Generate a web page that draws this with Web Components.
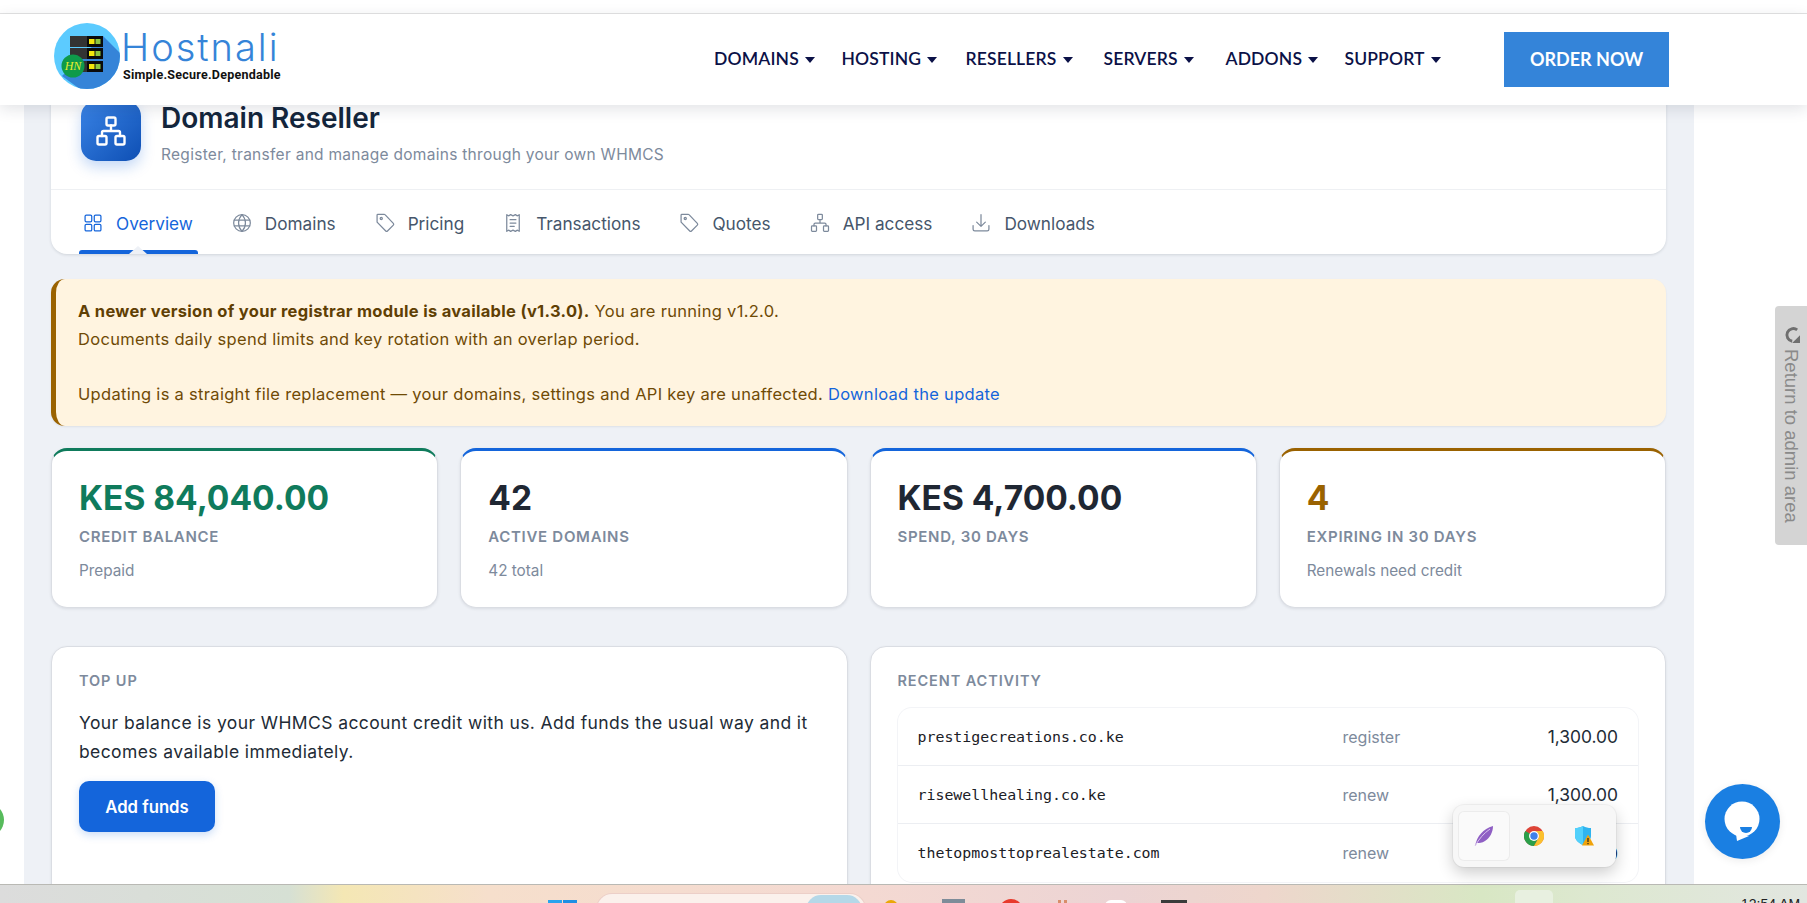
<!DOCTYPE html>
<html lang="en">
<head>
<meta charset="utf-8">
<title>Domain Reseller</title>
<style>
  html, body { margin: 0; height: 100%; background: #fff; overflow: hidden; }
  body { font-family: Inter, "Open Sans", sans-serif; color: #1f2733; }
</style>
</head>
<body>
<app-shell>
  <site-header slot="header"></site-header>
  <hero-card
    slot="content"
    heading="Domain Reseller"
    sub="Register, transfer and manage domains through your own WHMCS">
    <tab-link active icon="grid">Overview</tab-link>
    <tab-link icon="globe">Domains</tab-link>
    <tab-link icon="tag">Pricing</tab-link>
    <tab-link icon="receipt">Transactions</tab-link>
    <tab-link icon="tag">Quotes</tab-link>
    <tab-link icon="sitemap">API access</tab-link>
    <tab-link icon="download">Downloads</tab-link>
  </hero-card>
  <alert-box slot="content">
    <b>A newer version of your registrar module is available (v1.3.0).</b> You are running v1.2.0.<br>
    Documents daily spend limits and key rotation with an overlap period.<br><br>
    Updating is a straight file replacement — your domains, settings and API key are unaffected. <a>Download the update</a>
  </alert-box>
  <stat-grid slot="content">
    <stat-card accent="#0f7b5c" value-color="#0f7b5c" value="KES 84,040.00" label="Credit balance" note="Prepaid"></stat-card>
    <stat-card accent="#1465db" value="42" label="Active domains" note="42 total"></stat-card>
    <stat-card accent="#1465db" value="KES 4,700.00" label="Spend, 30 days"></stat-card>
    <stat-card accent="#9a6200" value-color="#9a6200" value="4" label="Expiring in 30 days" note="Renewals need credit"></stat-card>
  </stat-grid>
  <panel-row slot="content">
    <panel-card heading="Top up">
      <p>Your balance is your WHMCS account credit with us. Add funds the usual way and it becomes available immediately.</p>
      <add-button>Add funds</add-button>
    </panel-card>
    <panel-card heading="Recent activity">
      <activity-list>
        <activity-row domain="prestigecreations.co.ke" kind="register" amount="1,300.00"></activity-row>
        <activity-row domain="risewellhealing.co.ke" kind="renew" amount="1,300.00"></activity-row>
        <activity-row domain="thetopmosttoprealestate.com" kind="renew" amount="1,300.00"></activity-row>
      </activity-list>
    </panel-card>
  </panel-row>
  <task-bar slot="footer"></task-bar>
  <admin-tab slot="overlay"></admin-tab>
  <chat-button slot="overlay"></chat-button>
  <tray-popup slot="overlay"></tray-popup>
</app-shell>

<script>
const ICONS = {
  grid: '<rect x="2.500" y="2.500" width="8" height="8" rx="1.500"/><rect x="13.500" y="2.500" width="8" height="8" rx="1.500"/><rect x="2.500" y="13.500" width="8" height="8" rx="1.500"/><rect x="13.500" y="13.500" width="8" height="8" rx="1.500"/>',
  globe: '<circle cx="12" cy="12" r="10"/><path d="M2.800 8.500h18.400M2.800 15.500h18.400"/><path d="M12 2c-5.500 6-5.500 14 0 20M12 2c5.500 6 5.500 14 0 20"/>',
  tag: '<path d="M3.500 1.500h7.500a1.500 1.500 0 0 1 1 .5l10 10.500c.6.700.6 1.500 0 2.100l-7 7c-.6.600-1.500.6-2.100 0L2.500 11V2.500a1 1 0 0 1 1-1z"/><circle cx="7.500" cy="6.500" r="1.300"/>',
  receipt: '<path d="M4.500 22V2l2.200 1.400L9.200 2l2.800 1.400L14.800 2l2.500 1.400L19.500 2v20l-2.200-1.400-2.500 1.400-2.800-1.400L9.200 22l-2.500-1.400z"/><path d="M8.500 8h7M8.500 12h7M8.500 16h5"/>',
  sitemap: '<rect x="9.200" y="1.500" width="5.600" height="6.500" rx="1"/><rect x="1.800" y="15.500" width="6" height="6.500" rx="1"/><rect x="16.200" y="15.500" width="6" height="6.500" rx="1"/><path d="M12 8v4M4.800 15.500V13.500a1.500 1.500 0 0 1 1.500-1.500h11.400a1.500 1.500 0 0 1 1.500 1.500v2"/>',
  download: '<path d="M2.500 15v4.500a2 2 0 0 0 2 2h15a2 2 0 0 0 2-2V15"/><path d="M12 2v14M6.800 11L12 16l5.200-5"/>'
};

function icon(name, size, extra) {
  return `<svg width="${size}" height="${size}" viewBox="0 0 24 24" fill="none" stroke="currentColor" stroke-width="1.500" stroke-linecap="round" stroke-linejoin="round" ${extra || ''}>${ICONS[name]}</svg>`;
}

class AppShell extends HTMLElement {
  connectedCallback() {
    this.attachShadow({ mode: 'open' });
    this.shadowRoot.innerHTML = `
      <style>
        :host { display: flex; flex-direction: column; width: 1807px; height: 903px; position: relative; overflow: hidden; background: #fff; }
        .strip { height: 13px; flex: none; border-bottom: 1px solid #e3e3e3; }
        .top { position: relative; z-index: 2; flex: none; }
        .gutter { flex: 1; min-height: 0; padding: 0 113px 0 24px; overflow: hidden; }
        .page { background: #eef1f6; height: 100%; overflow: hidden; padding: 0 28px 0 27px; }
        .flow { margin-top: -32px; }
        .dot { position: absolute; left: -30px; top: 803px; width: 34px; height: 34px; border-radius: 50%; background: #57bb5c; }
        footer { flex: none; position: relative; z-index: 2; }
      </style>
      <div class="strip"></div>
      <div class="top"><slot name="header"></slot></div>
      <div class="gutter"><div class="page"><div class="flow"><slot name="content"></slot></div></div></div>
      <footer><slot name="footer"></slot></footer>
      <div class="dot"></div>
      <slot name="overlay"></slot>
    `;
  }
}

class SiteHeader extends HTMLElement {
  connectedCallback() {
    this.attachShadow({ mode: 'open' });
    const items = ['DOMAINS', 'HOSTING', 'RESELLERS', 'SERVERS', 'ADDONS', 'SUPPORT'];
    this.shadowRoot.innerHTML = `
      <style>
        :host { display: flex; align-items: center; height: 91px; background: #fff; box-shadow: 0 4px 14px rgba(30,40,60,.13); padding: 0 138px 0 54px; }
        .logo { display: flex; align-items: flex-start; width: 660px; flex: none; margin-top: -7px; }
        .words { margin: 6px 0 0 1px; display: flex; flex-direction: column; }
        .name { font: 300 38px/37px Inter, sans-serif; letter-spacing: 2px; color: #3584d8; }
        .tag { font: 700 12.500px/14px Roboto, sans-serif; color: #111; letter-spacing: .25px; margin: 2px 0 0 2px; }
        nav { display: grid; grid-template-columns: 127.500px 124px 138px 122px 119px auto; flex: 1; margin-top: -2px; }
        nav a { font: 600 17.500px/24px Lato, sans-serif; color: #0b1147; display: flex; align-items: center; gap: 6px; letter-spacing: .15px; }
        nav i { width: 0; height: 0; border: 5px solid transparent; border-top: 6px solid #0b1147; border-bottom: 0; margin-top: 2px; }
        .order { width: 165px; height: 55px; background: #3484d9; color: #fff; font: 700 18px/55px Lato, sans-serif; text-align: center; flex: none; }
        text { font-family: "Liberation Serif", serif; font-style: italic; }
      </style>
      <div class="logo">
        <svg width="66" height="66" viewBox="54 23 66 66">
          <defs><clipPath id="c"><circle cx="87" cy="56" r="33"/></clipPath></defs>
          <circle cx="87" cy="56" r="33" fill="#5ccbff"/>
          <polygon clip-path="url(#c)" points="103,36 125,58 125,95 88,95 62,76" fill="#3584d8"/>
          <g>
            <rect x="70" y="36" width="17" height="11" fill="#333"/><rect x="87" y="36" width="16" height="11" fill="#0b0b0b"/>
            <rect x="70" y="48" width="17" height="11" fill="#333"/><rect x="87" y="48" width="16" height="11" fill="#0b0b0b"/>
            <rect x="70" y="61" width="17" height="11" fill="#333"/><rect x="87" y="61" width="16" height="11" fill="#0b0b0b"/>
            <rect x="89" y="39" width="5.500" height="5" fill="#f2e60d"/><rect x="95.500" y="39" width="5" height="5" fill="#8cc63f"/>
            <rect x="89" y="51" width="5.500" height="5" fill="#f2e60d"/><rect x="95.500" y="51" width="5" height="5" fill="#8cc63f"/>
            <rect x="89" y="64" width="5.500" height="5" fill="#f2e60d"/><rect x="95.500" y="64" width="5" height="5" fill="#8cc63f"/>
          </g>
          <circle cx="73" cy="66" r="11.500" fill="#0e9a4a"/>
          <text x="73" y="70" text-anchor="middle" font-size="12" fill="#e6ee2a">HN</text>
        </svg>
        <div class="words"><span class="name">Hostnali</span><span class="tag">Simple.Secure.Dependable</span></div>
      </div>
      <nav>${items.map(i => `<a>${i}<i></i></a>`).join('')}</nav>
      <div class="order">ORDER NOW</div>
    `;
  }
}

class HeroCard extends HTMLElement {
  connectedCallback() {
    this.attachShadow({ mode: 'open' });
    this.shadowRoot.innerHTML = `
      <style>
        :host { display: block; background: #fff; border-radius: 16px; box-shadow: 0 1px 3px rgba(30,40,60,.14); overflow: hidden; }
        .head { height: 88px; padding: 28px 0 0 30px; display: flex; gap: 20px; border-bottom: 1px solid #eef0f3; }
        .mark { width: 60px; height: 60px; flex: none; border-radius: 15px; background: linear-gradient(135deg, #3a84e6, #0e4fb4); color: #fff; display: flex; align-items: center; justify-content: center; box-shadow: 0 6px 14px rgba(20,100,219,.25); }
        h1 { margin: 0; font-size: 28px; line-height: 34px; font-weight: 600; color: #14263c; }
        p { margin: 8px 0 0; font-size: 15.500px; letter-spacing: .28px; line-height: 24px; color: #7d8a9c; }
        .tabs { display: flex; gap: 30px; height: 64px; padding-left: 28px; }
      </style>
      <div class="head">
        <div class="mark">
          <svg width="30" height="30" viewBox="0 0 30 30" fill="none" stroke="currentColor" stroke-width="2.400" stroke-linecap="round" stroke-linejoin="round">
            <rect x="10.500" y="1.500" width="9" height="8" rx="1.500"/><rect x="1.500" y="20" width="9" height="8.500" rx="1.500"/><rect x="19.500" y="20" width="9" height="8.500" rx="1.500"/>
            <path d="M15 9.500V15M6 20v-3.500A1.500 1.500 0 0 1 7.500 15h15a1.500 1.500 0 0 1 1.500 1.500V20"/>
          </svg>
        </div>
        <div><h1>${this.getAttribute('heading')}</h1><p>${this.getAttribute('sub')}</p></div>
      </div>
      <div class="tabs"><slot></slot></div>
    `;
  }
}

class TabLink extends HTMLElement {
  connectedCallback() {
    this.attachShadow({ mode: 'open' });
    const active = this.hasAttribute('active');
    this.shadowRoot.innerHTML = `
      <style>
        :host { display: flex; align-items: center; gap: 13px; padding: 2px 5px 0 4px; position: relative; font-size: 17.200px; color: ${active ? '#1465db' : '#46566b'}; }
        svg { color: ${active ? '#1465db' : '#7d8a9c'}; flex: none; }
        .bar { position: absolute; left: 0; right: 0; bottom: 0; height: 4px; background: #1465db; border-radius: 3px 3px 0 0; }
        .notch { position: absolute; left: 50%; bottom: 0; margin-left: -9px; border: 9px solid transparent; border-bottom: 8px solid #eef1f6; border-top: 0; }
      </style>
      ${icon(this.getAttribute('icon'), 20)}
      <slot></slot>
      ${active ? '<span class="bar"></span><span class="notch"></span>' : ''}
    `;
  }
}

class AlertBox extends HTMLElement {
  connectedCallback() {
    this.attachShadow({ mode: 'open' });
    this.shadowRoot.innerHTML = `
      <style>
        :host { display: block; margin-top: 25px; background: #fff4e0; border-left: 5px solid #9a6200; border-radius: 14px; padding: 19px 23px 18px 22px; color: #6f4a05; font-size: 16.500px; letter-spacing: .3px; line-height: 27.600px; box-shadow: 0 1px 2px rgba(30,40,60,.08); }
        ::slotted(a) { color: #1465db; }
        ::slotted(b) { font-weight: 700; color: #5f3f04; }
      </style>
      <slot></slot>
    `;
  }
}

class StatGrid extends HTMLElement {
  connectedCallback() {
    this.attachShadow({ mode: 'open' });
    this.shadowRoot.innerHTML = `
      <style>:host { display: grid; grid-template-columns: repeat(4, 1fr); gap: 22px; margin-top: 22px; }</style>
      <slot></slot>
    `;
  }
}

class StatCard extends HTMLElement {
  connectedCallback() {
    this.attachShadow({ mode: 'open' });
    const note = this.getAttribute('note');
    this.shadowRoot.innerHTML = `
      <style>
        :host { display: block; height: 160px; box-sizing: border-box; background: #fff; border: 1px solid #dadde3; border-top: 3px solid ${this.getAttribute('accent')}; border-radius: 16px; padding: 25px 28px 0 27px; box-shadow: 0 1px 3px rgba(30,40,60,.10); }
        .v { font-size: 33.500px; line-height: 44px; font-weight: 700; color: ${this.getAttribute('value-color') || '#1f2733'}; }
        .l { margin-top: 7px; font-size: 15px; line-height: 20px; font-weight: 600; letter-spacing: .7px; text-transform: uppercase; color: #7d8a9c; }
        .n { margin-top: 14px; font-size: 15.300px; line-height: 20px; color: #7d8a9c; }
      </style>
      <div class="v">${this.getAttribute('value')}</div>
      <div class="l">${this.getAttribute('label')}</div>
      ${note ? `<div class="n">${note}</div>` : ''}
    `;
  }
}

class PanelRow extends HTMLElement {
  connectedCallback() {
    this.attachShadow({ mode: 'open' });
    this.shadowRoot.innerHTML = `
      <style>:host { display: grid; grid-template-columns: 1fr 1fr; gap: 22px; margin-top: 38px; }</style>
      <slot></slot>
    `;
  }
}

class PanelCard extends HTMLElement {
  connectedCallback() {
    this.attachShadow({ mode: 'open' });
    this.shadowRoot.innerHTML = `
      <style>
        :host { display: block; height: 300px; box-sizing: border-box; background: #fff; border: 1px solid #dadde3; border-radius: 16px; padding: 24px 27px 0; box-shadow: 0 1px 3px rgba(30,40,60,.08); }
        h2 { margin: 0 0 17px; font-size: 14.500px; line-height: 20px; font-weight: 600; letter-spacing: .9px; text-transform: uppercase; color: #7d8a9c; }
        ::slotted(p) { margin: 0 0 15px; font-size: 17.500px; letter-spacing: .4px; line-height: 29px; color: #222b36; }
      </style>
      <h2>${this.getAttribute('heading')}</h2>
      <slot></slot>
    `;
  }
}

class AddButton extends HTMLElement {
  connectedCallback() {
    this.attachShadow({ mode: 'open' });
    this.shadowRoot.innerHTML = `
      <style>
        :host { display: inline-block; width: 136px; height: 51px; background: #1465db; color: #fff; border-radius: 10px; font-size: 16.700px; font-weight: 600; line-height: 53px; text-align: center; box-shadow: 0 3px 8px rgba(20,100,219,.22); }
      </style>
      <slot></slot>
    `;
  }
}

class ActivityList extends HTMLElement {
  connectedCallback() {
    this.attachShadow({ mode: 'open' });
    this.shadowRoot.innerHTML = `
      <style>:host { display: block; margin-top: 1px; border-radius: 14px; box-shadow: 0 0 0 1px #f3f4f7; overflow: hidden; }</style>
      <slot></slot>
    `;
  }
}

class ActivityRow extends HTMLElement {
  connectedCallback() {
    this.attachShadow({ mode: 'open' });
    this.shadowRoot.innerHTML = `
      <style>
        :host { display: grid; grid-template-columns: 425px 1fr auto; align-items: center; height: 58px; box-sizing: border-box; padding: 0 20px; border-bottom: 1px solid #eceef2; }
        :host(:last-child) { border-bottom: 0; }
        .d { font: 14.900px/20px "DejaVu Sans Mono", monospace; color: #1b2026; }
        .k { font-size: 16px; color: #7d8a9c; }
        .a { font-size: 17.400px; color: #222b36; }
      </style>
      <span class="d">${this.getAttribute('domain')}</span>
      <span class="k">${this.getAttribute('kind')}</span>
      <span class="a">${this.getAttribute('amount')}</span>
    `;
  }
}

class TaskBar extends HTMLElement {
  connectedCallback() {
    this.attachShadow({ mode: 'open' });
    this.shadowRoot.innerHTML = `
      <style>
        :host { display: block; height: 19px; overflow: hidden; position: relative; border-top: 1px solid #b9b9b4; box-sizing: border-box;
          background: linear-gradient(90deg, #dcdcdc 0, #d6e0d4 16%, #f4e7b4 19%, #f6dfcc 27%, #f4d9d2 48%, #ecd4d4 62%, #eed6cc 70%, #d8e7c4 82%, #dde8d0 88%, #e2e6e0 100%); }
        .i { position: absolute; }
        .clock { position: absolute; left: 1741px; top: 10px; font: 14px/18px "Liberation Sans", sans-serif; color: #222; }
      </style>
      <span class="i" style="left:548px;top:15px;width:14px;height:14px;background:#2aa3ee"></span>
      <span class="i" style="left:563px;top:15px;width:14px;height:14px;background:#1f8fe4"></span>
      <span class="i" style="left:597px;top:9px;width:268px;height:30px;border-radius:15px;background:#fbf1ec;box-shadow:0 0 0 1px #eccfc8"></span>
      <span class="i" style="left:806px;top:10px;width:56px;height:30px;border-radius:15px;background:#b5d8e8"></span>
      <span class="i" style="left:884px;top:15px;width:14px;height:14px;border-radius:7px 7px 0 0;background:#eaa708"></span>
      <span class="i" style="left:942px;top:14px;width:23px;height:14px;background:#7e8c99"></span>
      <span class="i" style="left:946px;top:18px;width:15px;height:10px;background:#4ec6ef"></span>
      <span class="i" style="left:999px;top:14px;width:24px;height:24px;border-radius:50%;background:#e8392c"></span>
      <span class="i" style="left:1058px;top:15px;width:3px;height:10px;background:#d98d6a"></span>
      <span class="i" style="left:1064px;top:15px;width:3px;height:10px;background:#d98d6a"></span>
      <span class="i" style="left:1105px;top:15px;width:22px;height:14px;border-radius:6px;background:#fff"></span>
      <span class="i" style="left:1161px;top:15px;width:26px;height:14px;background:#3b3b3b"></span>
      <span class="i" style="left:1515px;top:5px;width:38px;height:24px;border-radius:5px;background:#e8f0e0"></span>
      <span class="clock">12:54 AM</span>
    `;
  }
}

class AdminTab extends HTMLElement {
  connectedCallback() {
    this.attachShadow({ mode: 'open' });
    this.shadowRoot.innerHTML = `
      <style>
        :host { position: absolute; left: 1775px; top: 306px; width: 32px; height: 239px; background: #d4d4d4; border-radius: 4px 0 0 4px; color: #8a8a8a; z-index: 3; display: flex; flex-direction: column; align-items: center; padding-top: 20px; box-sizing: border-box; }
        span { writing-mode: vertical-rl; font: 18.500px/20px "Liberation Sans", sans-serif; margin-top: 6px; white-space: nowrap; }
      </style>
      <svg width="17" height="17" viewBox="0 0 24 24" fill="none" stroke="#6f6f6f" stroke-width="4"><path d="M20 5.500A9 9 0 1 0 13 21.500"/><path d="M13 24h11V13z" fill="#6f6f6f" stroke="none"/></svg>
      <span>Return to admin area</span>
    `;
  }
}

class ChatButton extends HTMLElement {
  connectedCallback() {
    this.attachShadow({ mode: 'open' });
    this.shadowRoot.innerHTML = `
      <style>
        :host { position: absolute; left: 1705px; top: 784px; width: 75px; height: 75px; border-radius: 50%; background: #1a7fe2; z-index: 3; box-shadow: 0 2px 8px rgba(0,0,0,.08); }
        svg { display: block; }
      </style>
      <svg width="75" height="75" viewBox="0 0 75 75">
        <circle cx="37" cy="35" r="17.500" fill="#fff"/>
        <path d="M31 50l1 7 12-5z" fill="#fff"/>
        <path d="M35 43h12a6 6 0 0 1-12 0z" fill="#1a7fe2"/>
      </svg>
    `;
  }
}

class TrayPopup extends HTMLElement {
  connectedCallback() {
    this.attachShadow({ mode: 'open' });
    this.shadowRoot.innerHTML = `
      <style>
        :host { position: absolute; left: 1453px; top: 805px; width: 163px; height: 62px; box-sizing: border-box; background: #f7f7f7; border-radius: 11px; z-index: 3; box-shadow: 0 6px 16px rgba(0,0,0,.2), 0 0 0 1px rgba(0,0,0,.04); display: flex; align-items: center; padding: 0 6px; }
        .cell { width: 50px; height: 48px; flex: none; display: flex; align-items: center; justify-content: center; border-radius: 5px; }
        .on { background: #fafafa; box-shadow: 0 0 0 1px #ececec; }
      </style>
      <div class="cell on">
        <svg width="20" height="22" viewBox="0 0 20 22"><path d="M1 21C3 11 9 4 19 1c0 6-3 12-8 15-3 2-6 2-8 2z" fill="#8f5fc4"/><path d="M1 21C5 14 10 8 16 4" stroke="#d9c4ee" stroke-width="1" fill="none"/></svg>
      </div>
      <div class="cell">
        <svg width="20" height="20" viewBox="0 0 20 20">
          <circle cx="10" cy="10" r="10" fill="#dd4437"/>
          <path d="M10 10 1.300 5A10 10 0 0 0 10 20l4.300-7.500z" fill="#2b9f49"/>
          <path d="M10 5h8.700A10 10 0 0 1 10 20l4.300-7.500A5 5 0 0 0 10 5z" fill="#fbc02d"/>
          <circle cx="10" cy="10" r="5" fill="#fff"/><circle cx="10" cy="10" r="3.700" fill="#3f80ea"/>
        </svg>
      </div>
      <div class="cell">
        <svg width="20" height="20" viewBox="0 0 20 20">
          <path d="M9 0c3 1.500 5 2 8 2v8c0 4-3.500 7-8 9-4.500-2-8-5-8-9V2c3 0 5-.5 8-2z" fill="#2fb4ef"/>
          <path d="M9 0v19c-4.500-2-8-5-8-9V2c3 0 5-.5 8-2z" fill="#52d0fb"/>
          <path d="M14 8.500l6 11H8z" fill="#f0a30a"/>
          <path d="M13.400 12h1.200v4h-1.200zM13.400 17h1.200v1.200h-1.200z" fill="#222"/>
        </svg>
      </div>
    `;
  }
}

customElements.define('app-shell', AppShell);
customElements.define('site-header', SiteHeader);
customElements.define('hero-card', HeroCard);
customElements.define('tab-link', TabLink);
customElements.define('alert-box', AlertBox);
customElements.define('stat-grid', StatGrid);
customElements.define('stat-card', StatCard);
customElements.define('panel-row', PanelRow);
customElements.define('panel-card', PanelCard);
customElements.define('add-button', AddButton);
customElements.define('activity-list', ActivityList);
customElements.define('activity-row', ActivityRow);
customElements.define('task-bar', TaskBar);
customElements.define('admin-tab', AdminTab);
customElements.define('chat-button', ChatButton);
customElements.define('tray-popup', TrayPopup);
</script>
</body>
</html>
